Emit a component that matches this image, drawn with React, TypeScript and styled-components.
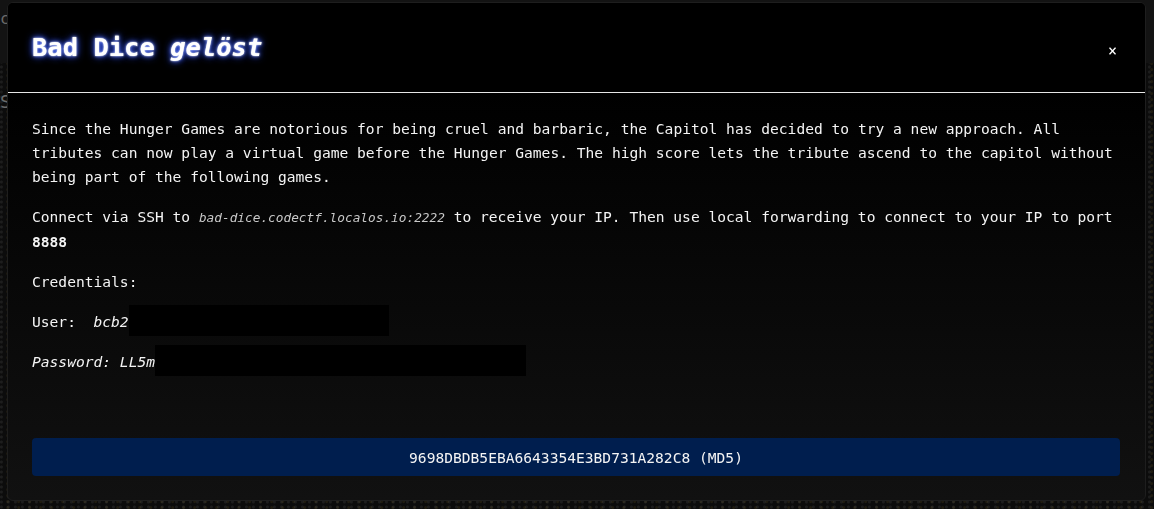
import React from 'react';
import styled, { createGlobalStyle } from 'styled-components';

const GlobalStyle = createGlobalStyle`
  html, body {
    margin: 0;
    padding: 0;
    height: 100%;
    background: #080808;
    overflow: hidden;
  }
  #root {
    height: 100%;
  }
  * {
    box-sizing: border-box;
  }
`;

const mono = `"DejaVu Sans Mono", "Liberation Mono", monospace`;

/* the page that sits dimmed behind the dialog */
const Page = styled.div`
  height: 100%;
  display: flex;
  flex-direction: column;
  font-family: ${mono};
  color: #6a6a6a;
  background:
    radial-gradient(circle at 20% 40%, rgba(90, 90, 90, 0.22) 0 1px, transparent 2px) 0 0 / 7px 5px,
    radial-gradient(circle at 70% 60%, rgba(120, 100, 40, 0.18) 0 1px, transparent 2px) 0 0 / 11px 6px,
    #0c0c0c;
`;

const NavBar = styled.div`
  height: 63px;
  background: #131313;
  padding: 9px 0 0 0;
  font-size: 16px;
`;

const PageHeading = styled.div`
  padding: 28px 0 0 0;
  font-size: 18px;
`;

const Overlay = styled.div`
  position: fixed;
  inset: 0;
  padding: 2px 8px 10px 7px;
  display: flex;
  align-items: flex-start;
`;

const Dialog = styled.div`
  width: 100%;
  border: 1px solid #1e1e1e;
  border-radius: 6px;
  overflow: hidden;
  font-family: ${mono};
  color: #f4f4f4;
  background: linear-gradient(180deg, #000 0%, #000 88px, #111 100%);
`;

const Header = styled.div`
  height: 90px;
  display: flex;
  align-items: center;
  justify-content: space-between;
  padding: 0 24px;
  background: #000;
  border-bottom: 1px solid #e6e6e6;
`;

const Title = styled.h3`
  margin: 0 0 2px 0;
  font-size: 25.5px;
  font-weight: 700;
  color: #fff;
  text-shadow:
    0 0 2px #fff,
    0 0 5px #4a6cff,
    0 0 9px #2d4dff;

  em {
    font-style: italic;
  }
`;

const Close = styled.button`
  border: 0;
  background: transparent;
  color: #fff;
  font-family: ${mono};
  font-size: 15px;
  padding: 8px 4px 0 0;
  cursor: pointer;
  line-height: 1;
`;

const Body = styled.div`
  padding: 24px 25px 24px 24px;
  font-size: 14.6px;
  line-height: 24px;
`;

const Para = styled.p`
  margin: 0 0 16px 0;
`;

const Host = styled.code`
  font-family: ${mono};
  font-size: 0.875em;
  font-style: italic;
  color: #c9c9c9;
`;

const Redacted = styled.span<{ $width: number }>`
  display: inline-block;
  width: ${({ $width }) => $width}px;
  height: 31px;
  margin: -5px 0 -3px 0;
  vertical-align: top;
  background: #000;
`;

const HashButton = styled.button`
  display: block;
  width: 100%;
  height: 38px;
  margin-top: 64px;
  border: 0;
  border-radius: 4px;
  background: #001e4e;
  color: #f4f4f4;
  font-family: ${mono};
  font-size: 14.6px;
  cursor: pointer;
`;

const App = () => (
  <>
    <GlobalStyle />
    <Page>
      <NavBar>c</NavBar>
      <PageHeading>S</PageHeading>
    </Page>
    <Overlay>
      <Dialog>
        <Header>
          <Title>
            Bad Dice <em>gelöst</em>
          </Title>
          <Close aria-label="Close">×</Close>
        </Header>
        <Body>
          <Para>
            Since the Hunger Games are notorious for being cruel and barbaric, the Capitol has
            decided to try a new approach. All tributes can now play a virtual game before the
            Hunger Games. The high score lets the tribute ascend to the capitol without being
            part of the following games.
          </Para>
          <Para>
            Connect via SSH to <Host>bad-dice.codectf.localos.io:2222</Host> to receive your IP.
            Then use local forwarding to connect to your IP to port <b>8888</b>
          </Para>
          <Para>Credentials:</Para>
          <Para>
            User:&nbsp; <em>bcb2</em>
            <Redacted $width={260} />
          </Para>
          <Para>
            <em>Password: LL5m</em>
            <Redacted $width={371} />
          </Para>
          <HashButton>9698DBDB5EBA6643354E3BD731A282C8 (MD5)</HashButton>
        </Body>
      </Dialog>
    </Overlay>
  </>
);

export default App;
